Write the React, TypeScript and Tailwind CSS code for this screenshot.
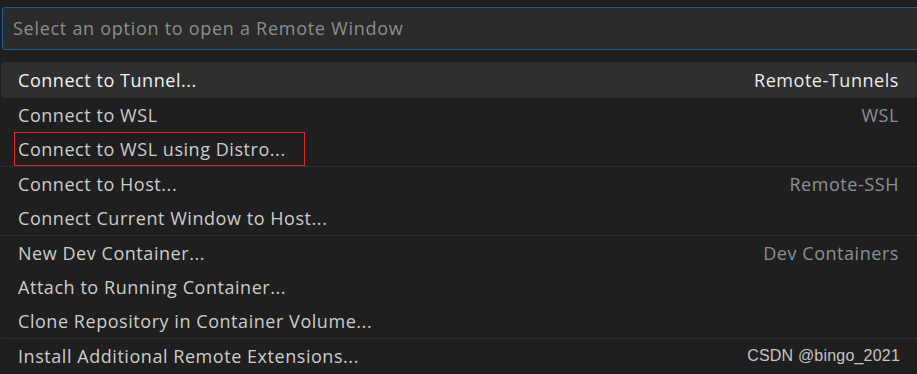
import React from "react";

type Item = {
  label: string;
  detail?: string;
  active?: boolean;
  boxed?: boolean;
  watermark?: string;
};

const GROUPS: Item[][] = [
  [{ label: "Connect to Tunnel...", detail: "Remote-Tunnels", active: true }],
  [
    { label: "Connect to WSL", detail: "WSL" },
    { label: "Connect to WSL using Distro...", boxed: true },
  ],
  [
    { label: "Connect to Host...", detail: "Remote-SSH" },
    { label: "Connect Current Window to Host..." },
  ],
  [
    { label: "New Dev Container...", detail: "Dev Containers" },
    { label: "Attach to Running Container..." },
    { label: "Clone Repository in Container Volume..." },
  ],
  [
    {
      label: "Install Additional Remote Extensions...",
      watermark: "CSDN @bingo_2021",
    },
  ],
];

function Row({ item }: { item: Item }) {
  const rowClass = item.active
    ? "flex items-center justify-between h-[36px] pl-[17px] pr-[18px] rounded-[4px] bg-[#2f2f2f] text-[#f2f2f2]"
    : "flex items-center justify-between h-[34px] pl-[17px] pr-[18px] text-[#cccccc]";

  return (
    <div className={rowClass}>
      {item.boxed ? (
        <div className="flex items-center h-[34px] w-[291px] -ml-[4px] pl-[3px] border border-[#e0282a]">
          {item.label}
        </div>
      ) : (
        <span>{item.label}</span>
      )}
      {item.detail && (
        <span className={item.active ? "text-[#ececec]" : "text-[#8b9199]"}>
          {item.detail}
        </span>
      )}
      {item.watermark && (
        <span className="font-['Liberation_Sans',Arial,sans-serif] text-[16px] tracking-[0.2px] text-[#c4c4c4] -mr-[1px]">
          {item.watermark}
        </span>
      )}
    </div>
  );
}

export default function App() {
  return (
    <div className="w-[917px] h-[374px] overflow-hidden bg-[#1f1f1f] pt-[7px] pl-[2px] font-['Open_Sans','Noto_Sans',sans-serif] text-[18px] tracking-[0.55px]">
      <div className="w-[930px] h-[43px] flex items-center pl-[10px] rounded-[3px] border border-[#17609f] bg-[#2a2a2a] text-[#8e8e8e] tracking-[0.72px]">
        Select an option to open a Remote Window
      </div>

      <div className="mt-[12px] -ml-[1px]">
        {GROUPS.map((group, i) => (
          <div
            key={i}
            className={i > 1 ? "border-t border-[#2d2d2d]" : ""}
          >
            {group.map((item) => (
              <Row key={item.label} item={item} />
            ))}
          </div>
        ))}
      </div>
    </div>
  );
}
